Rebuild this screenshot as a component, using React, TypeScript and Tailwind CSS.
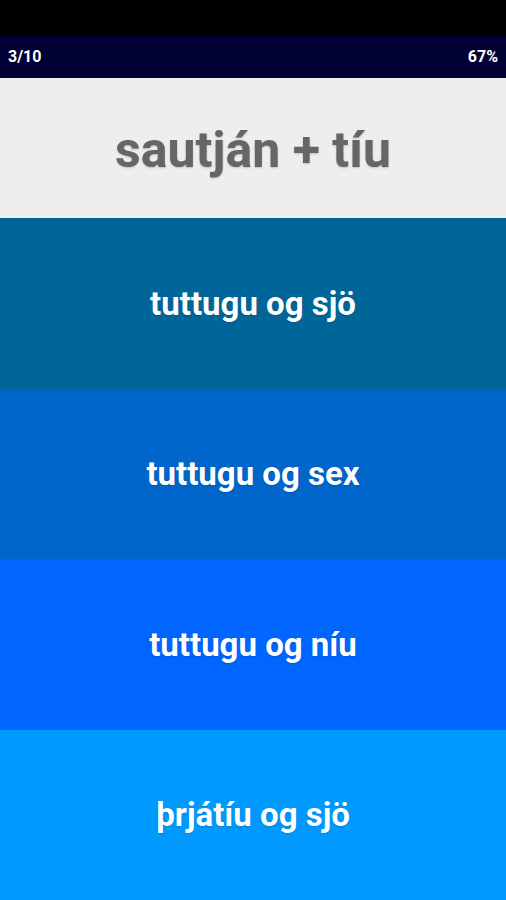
import React from "react";

const answers = [
  { text: "tuttugu og sjö", bg: "bg-[#006699]" },
  { text: "tuttugu og sex", bg: "bg-[#0066cc]" },
  { text: "tuttugu og níu", bg: "bg-[#0066ff]" },
  { text: "þrjátíu og sjö", bg: "bg-[#0099ff]" },
];

export default function App() {
  return (
    <div className="w-[506px] h-[900px] flex flex-col bg-black overflow-hidden" style={{ fontFamily: "Roboto, 'Noto Sans', sans-serif" }}>
      <div className="h-[36px] bg-black shrink-0" />
      <div className="h-[42px] shrink-0 bg-[#000033] flex items-center justify-between px-[8px] text-white font-bold text-[16px]">
        <span>3/10</span>
        <span>67%</span>
      </div>
      <div className="h-[140px] shrink-0 bg-[#eeeeee] flex items-center justify-center pt-[4px]">
        <span className="text-[#666666] font-bold text-[50px] leading-none [text-shadow:0_1px_2px_rgba(0,0,0,0.2)]">sautján + tíu</span>
      </div>
      <div className="flex-1 flex flex-col">
        {answers.map((a) => (
          <div key={a.text} className={`flex-1 flex items-center justify-center ${a.bg}`}>
            <span className="text-white font-bold text-[33px] leading-none [text-shadow:0_1px_2px_rgba(0,0,0,0.15)]">{a.text}</span>
          </div>
        ))}
      </div>
    </div>
  );
}
